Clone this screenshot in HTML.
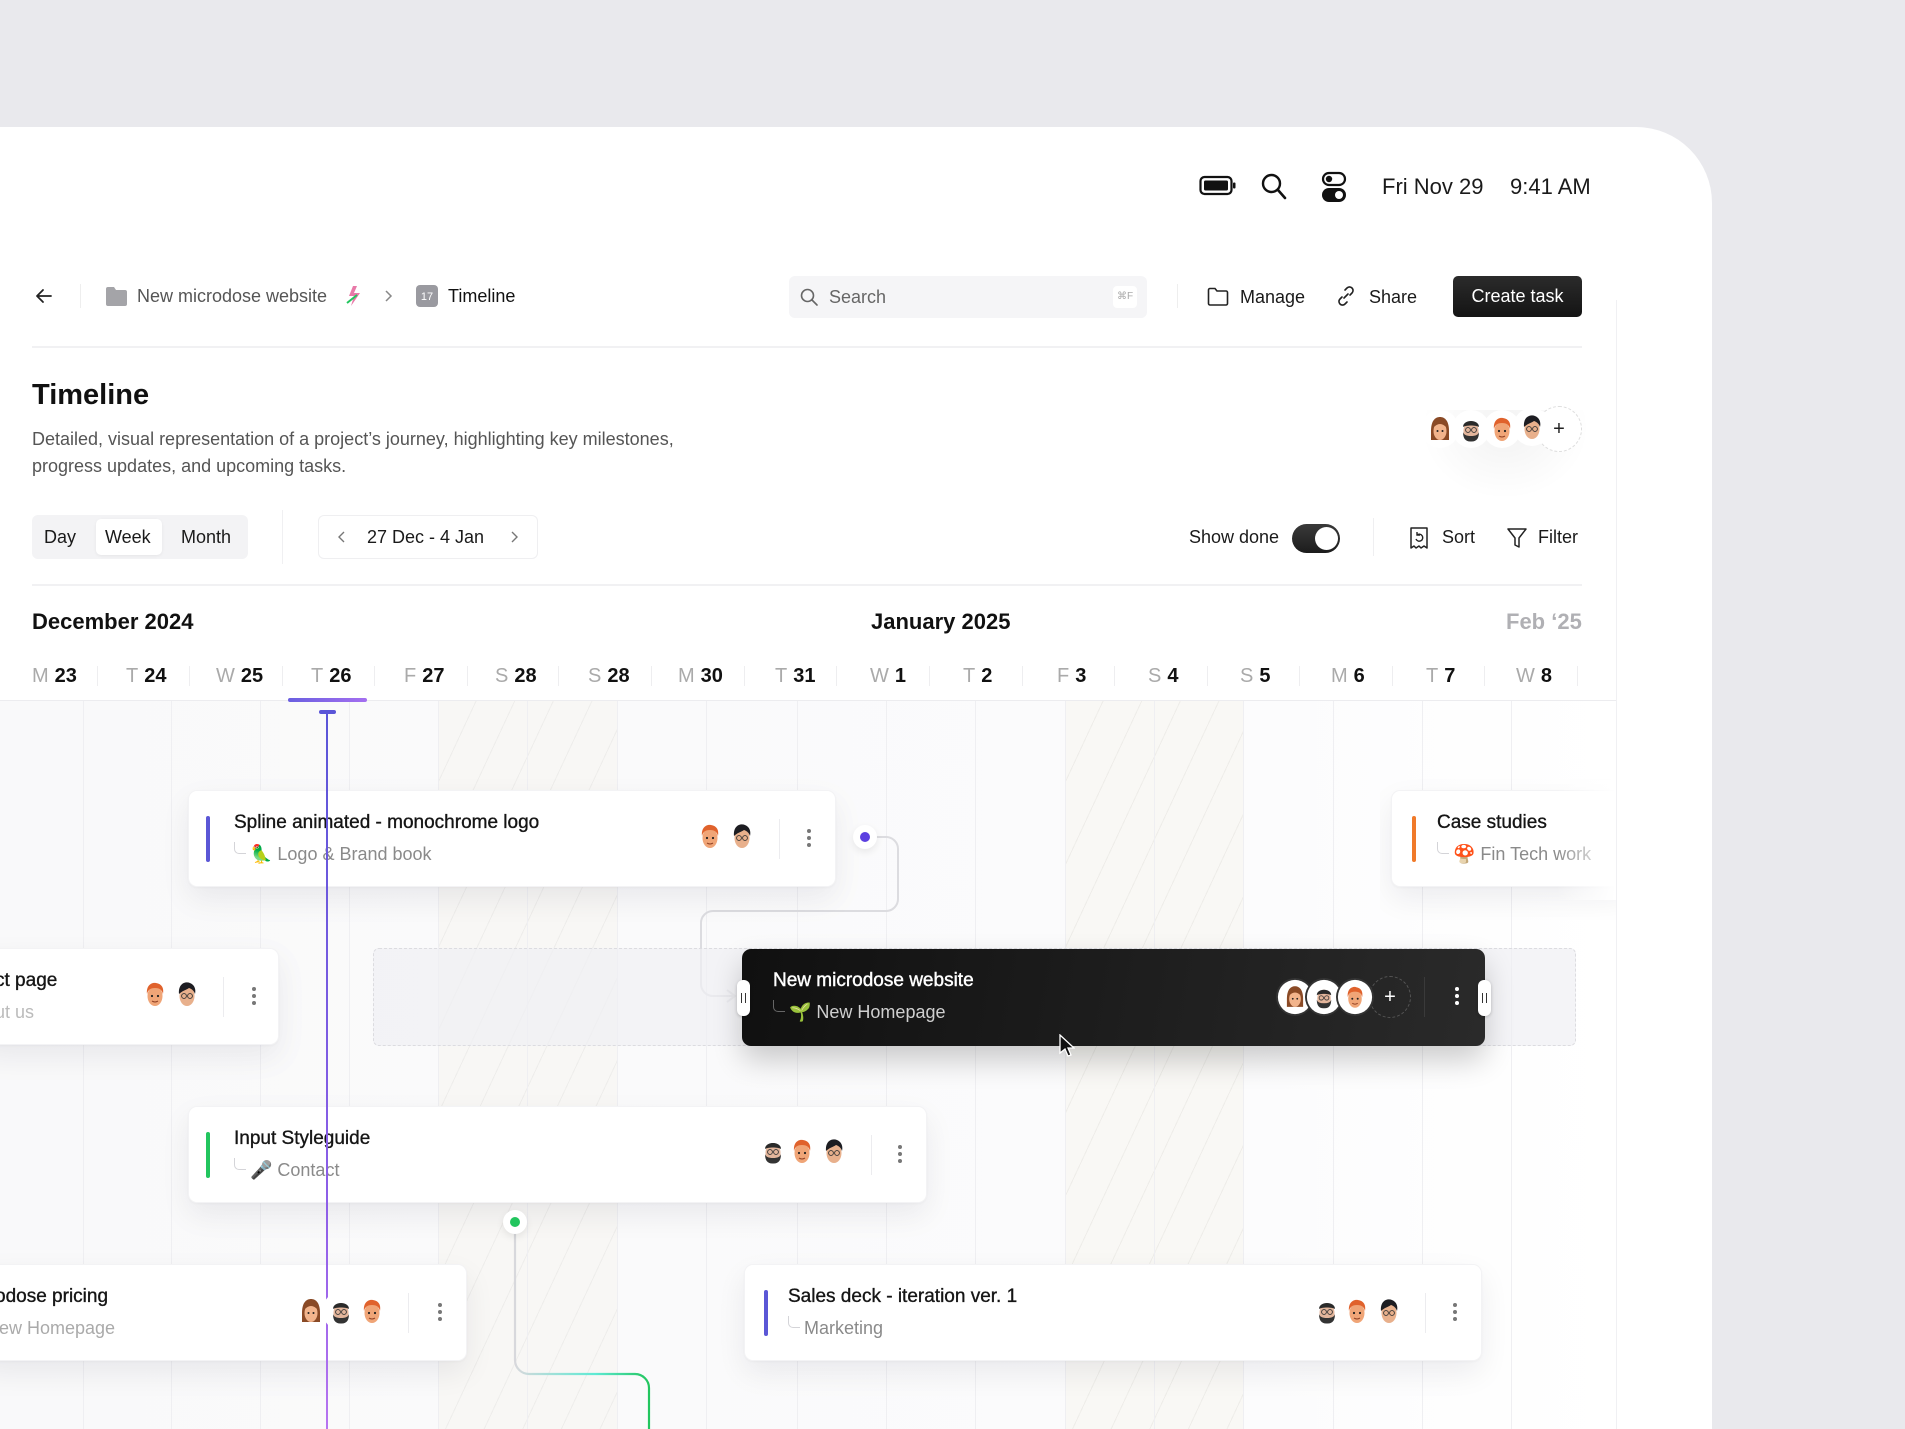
<!DOCTYPE html>
<html style="width:1905px;height:1429px;overflow:hidden"><head><meta charset="utf-8"><style>
*{margin:0;padding:0;box-sizing:border-box}
body{width:1905px;height:1429px;overflow:hidden;background:#e9e9ed;font-family:"Liberation Sans",sans-serif;color:#1a1a1a;position:relative}
.a{position:absolute}
.t{position:absolute;white-space:nowrap;line-height:28px}
.panel{left:0;top:127px;width:1712px;height:1302px;background:#fff;border-top-right-radius:76px}
.card{position:absolute;background:#fff;border-radius:9px;box-shadow:0 12px 30px rgba(20,20,40,.07),0 1px 2px rgba(0,0,0,.03);border:1px solid #f3f3f5}
.bar{position:absolute;left:17px;top:25px;width:4px;height:46px;border-radius:2px}
.ct{position:absolute;left:45px;top:18px;font-size:19px;line-height:28px;color:#151515;white-space:nowrap;-webkit-text-stroke:.35px #151515}
.cs{position:absolute;left:45px;top:49px;font-size:18px;line-height:28px;color:#8a8a8a;white-space:nowrap}
.cs i{font-style:normal;display:inline-block;width:12px;height:12px;border-left:1.5px solid #d4d4d8;border-bottom:1.5px solid #d4d4d8;border-bottom-left-radius:5px;margin-right:4px;vertical-align:6px}
.vd{position:absolute;width:1px;background:#ececef}
.keb{position:absolute;width:4px}
.keb b{display:block;width:4px;height:4px;border-radius:2px;background:#777;margin-bottom:3px}
.lbl{position:absolute;top:662px;font-size:20px;line-height:28px;white-space:nowrap;color:#111;font-weight:700}
.lbl span{color:#aaa;font-weight:400;margin-right:6px}
.tick{position:absolute;top:666px;width:1px;height:20px;background:#eeeef0}
.gl{position:absolute;top:701px;bottom:0;width:1px;background:#efeff2}
</style></head><body>
<div class="a panel"></div>

<svg class="a" style="left:1199px;top:175px" width="38" height="22" viewBox="0 0 38 22"><rect x="1.5" y="2" width="31" height="17" rx="4" fill="none" stroke="#111" stroke-width="2.2"/><rect x="5" y="5.5" width="24" height="10" rx="1.5" fill="#111"/><rect x="34" y="7.5" width="2.5" height="6" rx="1" fill="#111"/></svg>
<svg class="a" style="left:1260px;top:172px" width="28" height="30" viewBox="0 0 28 30"><circle cx="11.5" cy="11.5" r="8.5" fill="none" stroke="#111" stroke-width="2.4"/><path d="M18 18l7 8" stroke="#111" stroke-width="2.6" stroke-linecap="round"/></svg>
<svg class="a" style="left:1321px;top:171px" width="26" height="32" viewBox="0 0 26 32"><rect x="2" y="2" width="22" height="12" rx="6" fill="none" stroke="#111" stroke-width="2.2"/><circle cx="8" cy="8" r="3.2" fill="#111"/><rect x="1" y="17" width="24" height="14" rx="7" fill="#111"/><circle cx="18" cy="24" r="4" fill="#fff"/></svg>
<div class="t" style="left:1382px;top:173px;font-size:22px">Fri Nov 29</div>
<div class="t" style="left:1510px;top:173px;font-size:22px">9:41 AM</div>

<div class="a" style="left:1616px;top:300px;width:1px;height:1129px;background:#f0f0f3"></div>

<svg class="a" style="left:34px;top:286px" width="20" height="20" viewBox="0 0 20 20"><path d="M17 10H3M9 4l-6 6 6 6" fill="none" stroke="#222" stroke-width="1.8" stroke-linecap="round" stroke-linejoin="round"/></svg>
<div class="a" style="left:80px;top:284px;width:1px;height:24px;background:#eee"></div>
<svg class="a" style="left:105px;top:286px" width="23" height="21" viewBox="0 0 23 21"><path d="M1 3a2 2 0 0 1 2-2h6l2 3h9a2 2 0 0 1 2 2v12a2 2 0 0 1-2 2H3a2 2 0 0 1-2-2z" fill="#a4a4a8"/></svg>
<div class="t" style="left:137px;top:282px;font-size:18px;color:#555">New microdose website</div>
<svg class="a" style="left:343px;top:285px" width="20" height="22" viewBox="0 0 20 22"><path d="M10 1l-4 10h5l-3 10 9-13h-6l3-7z" fill="#e879a8"/><path d="M4 18l10-8" stroke="#22c55e" stroke-width="2"/></svg>
<svg class="a" style="left:382px;top:289px" width="12" height="14" viewBox="0 0 12 14"><path d="M4 2l5 5-5 5" fill="none" stroke="#888" stroke-width="1.5"/></svg>
<div class="a" style="left:416px;top:285px;width:22px;height:22px;border-radius:4px;background:#9a9aa0;color:#fff;font-size:11px;line-height:24px;text-align:center">17</div>
<div class="t" style="left:448px;top:282px;font-size:18px;color:#111">Timeline</div>

<div class="a" style="left:789px;top:276px;width:358px;height:42px;background:#f5f5f7;border-radius:6px"></div>
<svg class="a" style="left:799px;top:287px" width="20" height="20" viewBox="0 0 20 20"><circle cx="8.5" cy="8.5" r="6" fill="none" stroke="#666" stroke-width="1.6"/><path d="M13 13l5 5" stroke="#666" stroke-width="1.6" stroke-linecap="round"/></svg>
<div class="t" style="left:829px;top:283px;font-size:18px;color:#666">Search</div>
<div class="a" style="left:1113px;top:286px;width:24px;height:22px;background:#fff;border-radius:4px;font-size:10px;color:#aaa;text-align:center;line-height:22px">⌘F</div>
<div class="a" style="left:1177px;top:284px;width:1px;height:24px;background:#eee"></div>
<svg class="a" style="left:1207px;top:287px" width="22" height="20" viewBox="0 0 22 20"><path d="M1.5 3a1.5 1.5 0 0 1 1.5-1.5h5l2 2.5h9a1.5 1.5 0 0 1 1.5 1.5v11a1.5 1.5 0 0 1-1.5 1.5H3A1.5 1.5 0 0 1 1.5 16.5z" fill="none" stroke="#222" stroke-width="1.6"/></svg>
<div class="t" style="left:1240px;top:283px;font-size:18px">Manage</div>
<svg class="a" style="left:1335px;top:285px" width="22" height="22" viewBox="0 0 22 22"><path d="M9 13l4-4M10 5l2-2a3.5 3.5 0 0 1 5 5l-2 2M12 17l-2 2a3.5 3.5 0 0 1-5-5l2-2" fill="none" stroke="#222" stroke-width="1.6" stroke-linecap="round"/></svg>
<div class="t" style="left:1369px;top:283px;font-size:18px">Share</div>
<div class="a" style="left:1453px;top:276px;width:129px;height:41px;background:linear-gradient(#2b2b2b,#141414);border-radius:5px;color:#fff;font-size:18px;line-height:41px;text-align:center">Create task</div>

<div class="a" style="left:32px;top:346px;width:1550px;height:2px;background:#f1f1f3"></div>

<div class="t" style="left:32px;top:378px;font-size:29px;line-height:34px;font-weight:700;color:#111">Timeline</div>
<div class="t" style="left:32px;top:426px;font-size:18px;line-height:27px;color:#555">Detailed, visual representation of a project’s journey, highlighting key milestones,<br>progress updates, and upcoming tasks.</div>

<div class="a" style="left:1420px;top:410px;width:170px;height:90px;background:radial-gradient(ellipse at 50% 20%,rgba(0,0,0,.05),transparent 70%)"></div>
<div class="a" style="left:1536px;top:406px;width:46px;height:46px;border-radius:50%;border:1.5px dashed #ddd;background:#fff;text-align:center;line-height:44px;font-size:20px;color:#222">+</div>

<div class="a" style="left:32px;top:515px;width:216px;height:44px;background:#f3f3f5;border-radius:6px"></div>
<div class="a" style="left:96px;top:519px;width:66px;height:36px;background:#fff;border-radius:5px;box-shadow:0 1px 3px rgba(0,0,0,.06)"></div>
<div class="t" style="left:44px;top:523px;font-size:18px">Day</div>
<div class="t" style="left:105px;top:523px;font-size:18px">Week</div>
<div class="t" style="left:181px;top:523px;font-size:18px">Month</div>
<div class="a" style="left:282px;top:510px;width:1px;height:54px;background:#f0f0f2"></div>
<div class="a" style="left:318px;top:515px;width:220px;height:44px;border:1px solid #efeff1;border-radius:6px"></div>
<svg class="a" style="left:336px;top:530px" width="12" height="14" viewBox="0 0 12 14"><path d="M8 2L3 7l5 5" fill="none" stroke="#777" stroke-width="1.4"/></svg>
<div class="t" style="left:367px;top:523px;font-size:18px">27 Dec - 4 Jan</div>
<svg class="a" style="left:508px;top:530px" width="12" height="14" viewBox="0 0 12 14"><path d="M4 2l5 5-5 5" fill="none" stroke="#777" stroke-width="1.4"/></svg>

<div class="t" style="left:1189px;top:523px;font-size:18px">Show done</div>
<div class="a" style="left:1292px;top:524px;width:48px;height:29px;border-radius:15px;background:linear-gradient(#3a3a3a,#1c1c1c)"></div>
<div class="a" style="left:1315px;top:527px;width:23px;height:23px;border-radius:50%;background:#fff"></div>
<div class="a" style="left:1373px;top:518px;width:1px;height:38px;background:#efeff1"></div>
<svg class="a" style="left:1408px;top:526px" width="22" height="24" viewBox="0 0 22 24"><path d="M3 2h16v20l-3-2-3 2-2-2-3 2-2-2-3 2z" fill="none" stroke="#222" stroke-width="1.5" stroke-linejoin="round"/><path d="M8 13a3.5 3.5 0 1 0 1-4M9 6v3h3" fill="none" stroke="#222" stroke-width="1.4"/></svg>
<div class="t" style="left:1442px;top:523px;font-size:18px">Sort</div>
<svg class="a" style="left:1506px;top:526px" width="22" height="24" viewBox="0 0 22 24"><path d="M2 3h18l-7 9v9l-4-2v-7z" fill="none" stroke="#222" stroke-width="1.5" stroke-linejoin="round"/></svg>
<div class="t" style="left:1538px;top:523px;font-size:18px">Filter</div>

<div class="a" style="left:32px;top:584px;width:1550px;height:2px;background:#f1f1f3"></div>

<div class="t" style="left:32px;top:608px;font-size:22px;font-weight:700;color:#111">December 2024</div>
<div class="t" style="left:871px;top:608px;font-size:22px;font-weight:700;color:#111">January 2025</div>
<div class="t" style="left:1506px;top:608px;font-size:22px;font-weight:700;color:#b0b0b4">Feb ‘25</div>

<div class="lbl" style="left:32px"><span>M</span>23</div>
<div class="lbl" style="left:126px"><span>T</span>24</div>
<div class="lbl" style="left:216px"><span>W</span>25</div>
<div class="lbl" style="left:311px"><span>T</span>26</div>
<div class="lbl" style="left:404px"><span>F</span>27</div>
<div class="lbl" style="left:495px"><span>S</span>28</div>
<div class="lbl" style="left:588px"><span>S</span>28</div>
<div class="lbl" style="left:678px"><span>M</span>30</div>
<div class="lbl" style="left:775px"><span>T</span>31</div>
<div class="lbl" style="left:870px"><span>W</span>1</div>
<div class="lbl" style="left:963px"><span>T</span>2</div>
<div class="lbl" style="left:1057px"><span>F</span>3</div>
<div class="lbl" style="left:1148px"><span>S</span>4</div>
<div class="lbl" style="left:1240px"><span>S</span>5</div>
<div class="lbl" style="left:1331px"><span>M</span>6</div>
<div class="lbl" style="left:1426px"><span>T</span>7</div>
<div class="lbl" style="left:1516px"><span>W</span>8</div>
<div class="tick" style="left:97px"></div><div class="tick" style="left:189px"></div><div class="tick" style="left:282px"></div><div class="tick" style="left:374px"></div><div class="tick" style="left:467px"></div><div class="tick" style="left:558px"></div><div class="tick" style="left:651px"></div><div class="tick" style="left:744px"></div><div class="tick" style="left:836px"></div><div class="tick" style="left:929px"></div><div class="tick" style="left:1022px"></div><div class="tick" style="left:1114px"></div><div class="tick" style="left:1207px"></div><div class="tick" style="left:1299px"></div><div class="tick" style="left:1392px"></div><div class="tick" style="left:1484px"></div><div class="tick" style="left:1577px"></div>

<div class="a" style="left:0;top:701px;width:1616px;height:728px;background:linear-gradient(90deg,#f9f9fa,#fbfbfc 70%,#fff)"></div>
<div class="a" style="left:438px;top:701px;width:179px;height:728px;background:#f8f7f5 repeating-linear-gradient(115deg,transparent 0 34px,#eeedeb 34px 35px)"></div>
<div class="a" style="left:1065px;top:701px;width:178px;height:728px;background:#f9f8f5 repeating-linear-gradient(115deg,transparent 0 34px,#eeede9 34px 35px)"></div>
<div class="gl" style="left:83px"></div><div class="gl" style="left:171px"></div><div class="gl" style="left:260px"></div><div class="gl" style="left:349px"></div><div class="gl" style="left:438px"></div><div class="gl" style="left:527px"></div><div class="gl" style="left:617px"></div><div class="gl" style="left:706px"></div><div class="gl" style="left:797px"></div><div class="gl" style="left:886px"></div><div class="gl" style="left:975px"></div><div class="gl" style="left:1065px"></div><div class="gl" style="left:1154px"></div><div class="gl" style="left:1243px"></div><div class="gl" style="left:1333px"></div><div class="gl" style="left:1422px"></div><div class="gl" style="left:1511px"></div>
<div class="a" style="left:0;top:700px;width:1616px;height:1px;background:#ececef"></div>
<div class="a" style="left:288px;top:698px;width:79px;height:4px;border-radius:2px;background:linear-gradient(90deg,#6a5fe0,#a46ff0)"></div>

<svg class="a" style="left:0;top:0" width="1905" height="1429" viewBox="0 0 1905 1429">
<defs><linearGradient id="g1" x1="0" y1="0" x2="1" y2="0"><stop offset="0" stop-color="#d8d8dc"/><stop offset=".6" stop-color="#5eead4"/><stop offset="1" stop-color="#22c55e"/></linearGradient></defs>
<path d="M872 837h14a12 12 0 0 1 12 12v50a12 12 0 0 1-12 12H713a12 12 0 0 0-12 12v61a12 12 0 0 0 12 12h22M727 990l8 6-8 6" fill="none" stroke="#dcdce0" stroke-width="2"/>
<path d="M515 1230v130a14 14 0 0 0 14 14h106a14 14 0 0 1 14 14v41" fill="none" stroke="url(#g1)" stroke-width="2.2"/>
</svg>

<div class="a" style="left:373px;top:948px;width:1203px;height:98px;border:1.5px dashed #dcdce0;border-radius:6px;background:rgba(240,240,243,.7)"></div>

<div class="card" style="left:188px;top:790px;width:648px;height:97px">
 <div class="bar" style="background:#5b57d6"></div>
 <div class="ct">Spline animated - monochrome logo</div>
 <div class="cs"><i></i>🦜 Logo &amp; Brand book</div>
 <div class="vd" style="left:590px;top:28px;height:40px"></div>
 <div class="keb" style="left:618px;top:38px"><b></b><b></b><b></b></div>
</div>
<div class="a" style="left:853px;top:825px;width:24px;height:24px;border-radius:50%;background:#fff;box-shadow:0 3px 8px rgba(0,0,0,.08)"></div>
<div class="a" style="left:860px;top:832px;width:10px;height:10px;border-radius:50%;background:#5b3fe0"></div>

<div class="card" style="left:-20px;top:948px;width:299px;height:97px">
 <div class="ct" style="left:14px">ct page</div>
 <div class="cs" style="left:14px;color:#bbb">ut us</div>
 <div class="vd" style="left:242px;top:28px;height:40px"></div>
 <div class="keb" style="left:271px;top:38px"><b></b><b></b><b></b></div>
</div>

<div class="a" style="left:1380px;top:770px;width:236px;height:150px;overflow:hidden">
<div class="card" style="left:11px;top:20px;width:240px;height:97px;border-right:none">
 <div class="bar" style="left:20px;background:#f07a2a"></div>
 <div class="ct">Case studies</div>
 <div class="cs"><i></i>🍄 Fin Tech work</div>
</div>
</div>
<div class="a" style="left:1556px;top:780px;width:60px;height:120px;background:linear-gradient(90deg,rgba(255,255,255,0),#fff)"></div>

<div class="a" style="left:742px;top:949px;width:743px;height:97px;border-radius:9px;background:linear-gradient(100deg,#101010,#2a2a2a);box-shadow:0 14px 30px rgba(0,0,0,.2)">
 <div class="t" style="left:31px;top:18px;font-size:19px;color:#fff;-webkit-text-stroke:.4px #fff">New microdose website</div>
 <div class="t" style="left:31px;top:49px;font-size:18px;color:#cfcfcf"><span style="display:inline-block;width:12px;height:12px;border-left:1.5px solid #666;border-bottom:1.5px solid #666;border-bottom-left-radius:5px;margin-right:4px;vertical-align:6px"></span>🌱 New Homepage</div>
 <div class="a" style="left:627px;top:27px;width:42px;height:42px;border-radius:50%;border:1.5px dashed #555;color:#fff;text-align:center;line-height:40px;font-size:20px">+</div>
 <div class="a" style="left:682px;top:28px;width:1px;height:40px;background:#3a3a3a"></div>
 <div class="keb" style="left:713px;top:38px"><b style="background:#fff"></b><b style="background:#fff"></b><b style="background:#fff"></b></div>
 <div class="a" style="left:-5px;top:31px;width:13px;height:36px;border-radius:6px;background:#fff;box-shadow:0 1px 3px rgba(0,0,0,.2)"></div>
 <div class="a" style="left:736px;top:31px;width:13px;height:36px;border-radius:6px;background:#fff;box-shadow:0 1px 3px rgba(0,0,0,.2)"></div>
 <div class="a" style="left:-1px;top:44px;width:5px;height:10px;border-left:1px solid #333;border-right:1px solid #333"></div>
 <div class="a" style="left:740px;top:44px;width:5px;height:10px;border-left:1px solid #333;border-right:1px solid #333"></div>
</div>
<svg class="a" style="left:1059px;top:1034px" width="16" height="24" viewBox="0 0 16 24"><path d="M1 1v18l5-4 3 7 3-1-3-7h6z" fill="#111" stroke="#fff" stroke-width="1.3"/></svg>

<div class="card" style="left:188px;top:1106px;width:739px;height:97px">
 <div class="bar" style="background:#22c55e"></div>
 <div class="ct">Input Styleguide</div>
 <div class="cs"><i></i>🎤 Contact</div>
 <div class="vd" style="left:682px;top:28px;height:40px"></div>
 <div class="keb" style="left:709px;top:38px"><b></b><b></b><b></b></div>
</div>
<div class="a" style="left:503px;top:1210px;width:24px;height:24px;border-radius:50%;background:#fff;box-shadow:0 3px 8px rgba(0,0,0,.08)"></div>
<div class="a" style="left:510px;top:1217px;width:10px;height:10px;border-radius:50%;background:#22c55e"></div>

<div class="card" style="left:-20px;top:1264px;width:487px;height:97px">
 <div class="ct" style="left:14px">odose pricing</div>
 <div class="cs" style="left:14px;color:#aaa">lew Homepage</div>
 <div class="vd" style="left:427px;top:28px;height:40px"></div>
 <div class="keb" style="left:457px;top:38px"><b></b><b></b><b></b></div>
</div>

<div class="card" style="left:744px;top:1264px;width:738px;height:97px">
 <div class="bar" style="left:19px;background:#5b57d6"></div>
 <div class="ct" style="left:43px">Sales deck - iteration ver. 1</div>
 <div class="cs" style="left:43px"><i></i>Marketing</div>
 <div class="vd" style="left:680px;top:28px;height:40px"></div>
 <div class="keb" style="left:708px;top:38px"><b></b><b></b><b></b></div>
</div>

<div class="a" style="left:326px;top:712px;width:2px;height:717px;background:linear-gradient(#5a55d8,#8f5fe8 70%,#b774f0)"></div>
<div class="a" style="left:319px;top:710px;width:17px;height:4px;border-radius:2px;background:#5a55d8"></div>

<svg width="0" height="0" style="position:absolute"><defs>
<symbol id="f1" viewBox="0 0 40 40"><circle cx="20" cy="20" r="19" fill="#fff"/><ellipse cx="20" cy="22" rx="7.5" ry="10" fill="#f0a577"/><path d="M12 20c-1-9 5-12 9-11 6 1 8 5 7 11-1-4-3-6-8-6s-7 2-8 6z" fill="#e0622c"/><circle cx="17" cy="22" r="1.1" fill="#222"/><circle cx="23" cy="22" r="1.1" fill="#222"/><path d="M17 27q3 2 6 0" stroke="#8a3a1e" fill="none"/></symbol>
<symbol id="f2" viewBox="0 0 40 40"><circle cx="20" cy="20" r="19" fill="#fff"/><ellipse cx="20" cy="22" rx="7.5" ry="10" fill="#e8b08c"/><path d="M12 20c-1-10 6-13 11-11 5 2 6 7 5 11-1-3-3-5-6-6-3 2-7 3-10 6z" fill="#1d1d22"/><circle cx="17" cy="22" r="2.4" fill="none" stroke="#333" stroke-width=".9"/><circle cx="23" cy="22" r="2.4" fill="none" stroke="#333" stroke-width=".9"/></symbol>
<symbol id="f3" viewBox="0 0 40 40"><circle cx="20" cy="20" r="19" fill="#fff"/><ellipse cx="20" cy="22" rx="7.5" ry="10" fill="#e3b59b"/><path d="M12 18c0-8 16-8 16 0-3-2-13-2-16 0z" fill="#2a2a2a"/><path d="M12 23q0 10 8 9.5 8 .5 8-9.5-1 4-8 4t-8-4z" fill="#333"/><circle cx="17" cy="21" r="2.4" fill="none" stroke="#333" stroke-width=".9"/><circle cx="23" cy="21" r="2.4" fill="none" stroke="#333" stroke-width=".9"/></symbol>
<symbol id="f4" viewBox="0 0 40 40"><circle cx="20" cy="20" r="19" fill="#fff"/><path d="M11 22c0-10 4-14 9-14s9 4 9 14v9h-18z" fill="#8a4a26"/><ellipse cx="20" cy="22" rx="6.5" ry="9" fill="#f2b48c"/><path d="M13 19q7-8 14 0-2-7-7-7t-7 7z" fill="#8a4a26"/><circle cx="17.5" cy="22" r="1" fill="#222"/><circle cx="22.5" cy="22" r="1" fill="#222"/></symbol>
</defs></svg>
<svg class="a" style="left:1420px;top:409px" width="40" height="40"><use href="#f4"/></svg>
<svg class="a" style="left:1451px;top:409px" width="40" height="40"><use href="#f3"/></svg>
<svg class="a" style="left:1482px;top:409px" width="40" height="40"><use href="#f1"/></svg>
<svg class="a" style="left:1512px;top:407px" width="40" height="40"><use href="#f2"/></svg>
<svg class="a" style="left:690px;top:816px" width="40" height="40"><use href="#f1"/></svg>
<svg class="a" style="left:722px;top:816px" width="40" height="40"><use href="#f2"/></svg>
<svg class="a" style="left:135px;top:974px" width="40" height="40"><use href="#f1"/></svg>
<svg class="a" style="left:167px;top:974px" width="40" height="40"><use href="#f2"/></svg>
<svg class="a" style="left:1275px;top:977px" width="40" height="40"><circle cx="20" cy="20" r="19" fill="#333"/><use href="#f4" x="2" y="2" width="36" height="36"/></svg>
<svg class="a" style="left:1304px;top:977px" width="40" height="40"><circle cx="20" cy="20" r="19" fill="#333"/><use href="#f3" x="2" y="2" width="36" height="36"/></svg>
<svg class="a" style="left:1335px;top:977px" width="40" height="40"><circle cx="20" cy="20" r="19" fill="#333"/><use href="#f1" x="2" y="2" width="36" height="36"/></svg>
<svg class="a" style="left:753px;top:1131px" width="40" height="40"><use href="#f3"/></svg>
<svg class="a" style="left:782px;top:1131px" width="40" height="40"><use href="#f1"/></svg>
<svg class="a" style="left:814px;top:1131px" width="40" height="40"><use href="#f2"/></svg>
<svg class="a" style="left:291px;top:1291px" width="40" height="40"><use href="#f4"/></svg>
<svg class="a" style="left:321px;top:1291px" width="40" height="40"><use href="#f3"/></svg>
<svg class="a" style="left:352px;top:1291px" width="40" height="40"><use href="#f1"/></svg>
<svg class="a" style="left:1307px;top:1291px" width="40" height="40"><use href="#f3"/></svg>
<svg class="a" style="left:1337px;top:1291px" width="40" height="40"><use href="#f1"/></svg>
<svg class="a" style="left:1369px;top:1291px" width="40" height="40"><use href="#f2"/></svg>
</body></html>
